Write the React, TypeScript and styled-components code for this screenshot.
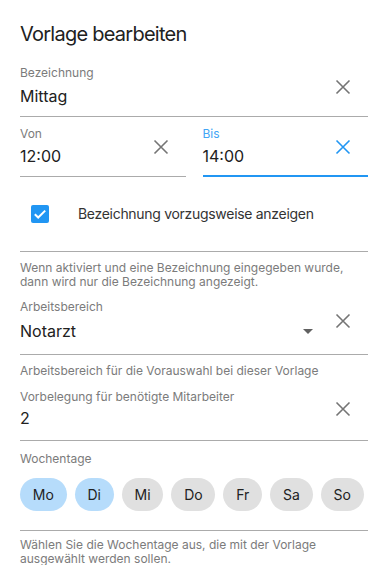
import React from "react";
import styled, { createGlobalStyle } from "styled-components";

const GlobalStyle = createGlobalStyle`
  html, body { margin: 0; padding: 0; background: #ffffff; }
  body { font-family: Inter, "Noto Sans", Roboto, sans-serif; }
  * { box-sizing: border-box; }
`;

const BLUE = "#2196f3";
const LINE = "#ababab";
const GREY_TEXT = "#7b7b7b";
const DARK = "#212121";

const Page = styled.div`
  width: 384px;
  padding: 22px 16px 0 20px;
  display: flex;
  flex-direction: column;
  font-family: Inter, "Noto Sans", Roboto, sans-serif;
  color: ${DARK};
`;

const Title = styled.h1`
  margin: 0;
  font-size: 20px;
  line-height: 24px;
  font-weight: 400;
  letter-spacing: -0.75px;
  color: ${DARK};
`;

const Field = styled.div<{ $mt?: number; $pb: number; $active?: boolean }>`
  display: flex;
  align-items: center;
  margin-top: ${(p) => p.$mt ?? 0}px;
  padding-bottom: ${(p) => p.$pb}px;
  border-bottom: ${(p) => (p.$active ? `2px solid ${BLUE}` : `1px solid ${LINE}`)};
`;

const FieldBody = styled.div`
  flex: 1;
  min-width: 0;
  display: flex;
  flex-direction: column;
`;

const Label = styled.span<{ $active?: boolean }>`
  font-size: 12px;
  line-height: 16px;
  color: ${(p) => (p.$active ? "#42a5f5" : GREY_TEXT)};
`;

const Value = styled.div<{ $gap: number }>`
  margin-top: ${(p) => p.$gap}px;
  font-size: 16px;
  line-height: 24px;
  color: ${DARK};
  display: flex;
  align-items: center;
  justify-content: space-between;
`;

const IconSlot = styled.span<{ $nudge?: number }>`
  width: 24px;
  height: 24px;
  margin: ${(p) => p.$nudge ?? 0}px 13px 0 0;
  display: inline-flex;
  flex-shrink: 0;
`;

const ArrowSlot = styled.span`
  width: 24px;
  height: 24px;
  margin-right: 11px;
  display: inline-flex;
`;

const TimeRow = styled.div`
  display: grid;
  grid-template-columns: 1fr 1fr;
  column-gap: 17px;
  margin-top: 9px;
`;

const CheckRow = styled.label`
  display: flex;
  align-items: center;
  gap: 29px;
  padding: 27px 0 27px 11px;
  border-bottom: 1px solid ${LINE};
`;

const CheckText = styled.span`
  font-size: 14px;
  line-height: 20px;
  letter-spacing: -0.3px;
  color: #333333;
`;

const Helper = styled.p<{ $mt: number }>`
  margin: ${(p) => p.$mt}px 0 0 0;
  font-size: 12px;
  line-height: 13.5px;
  color: ${GREY_TEXT};
`;

const DaySection = styled.div`
  margin-top: 10px;
  padding-bottom: 19.5px;
  border-bottom: 1px solid ${LINE};
  display: flex;
  flex-direction: column;
`;

const DayRow = styled.div`
  display: flex;
  gap: 8px;
  margin-top: 11px;
`;

const DayChip = styled.span<{ $selected?: boolean }>`
  height: 33px;
  padding: 0 12.8px;
  border-radius: 16.5px;
  display: inline-flex;
  align-items: center;
  justify-content: center;
  font-size: 14px;
  color: #222222;
  background: ${(p) => (p.$selected ? "#b6dcfb" : "#e0e0e0")};
`;

const ClearIcon = ({ color }: { color: string }) => (
  <svg width="24" height="24" viewBox="0 0 24 24" fill="none">
    <path d="M5.5 5.5L18.5 18.5M18.5 5.5L5.5 18.5" stroke={color} strokeWidth="1.6" />
  </svg>
);

const DropArrow = () => (
  <svg width="24" height="24" viewBox="0 0 24 24">
    <path d="M7 10l5 5 5-5z" fill="#616161" />
  </svg>
);

const CheckBox = () => (
  <svg width="18" height="18" viewBox="0 0 18 18">
    <rect x="0" y="0" width="18" height="18" rx="2" fill={BLUE} />
    <path d="M3.8 9.2L7.2 12.5L14.2 5.6" stroke="#ffffff" strokeWidth="2" fill="none" />
  </svg>
);

const days: { label: string; selected: boolean }[] = [
  { label: "Mo", selected: true },
  { label: "Di", selected: true },
  { label: "Mi", selected: false },
  { label: "Do", selected: false },
  { label: "Fr", selected: false },
  { label: "Sa", selected: false },
  { label: "So", selected: false },
];

export default function App() {
  return (
    <>
      <GlobalStyle />
      <Page>
        <Title>Vorlage bearbeiten</Title>

        <Field $mt={19} $pb={8}>
          <FieldBody>
            <Label>Bezeichnung</Label>
            <Value $gap={3}>Mittag</Value>
          </FieldBody>
          <IconSlot>
            <ClearIcon color="#757575" />
          </IconSlot>
        </Field>

        <TimeRow>
          <Field $pb={8}>
            <FieldBody>
              <Label>Von</Label>
              <Value $gap={2}>12:00</Value>
            </FieldBody>
            <IconSlot>
              <ClearIcon color="#757575" />
            </IconSlot>
          </Field>
          <Field $pb={7} $active>
            <FieldBody>
              <Label $active>Bis</Label>
              <Value $gap={2}>14:00</Value>
            </FieldBody>
            <IconSlot>
              <ClearIcon color={BLUE} />
            </IconSlot>
          </Field>
        </TimeRow>

        <CheckRow>
          <CheckBox />
          <CheckText>Bezeichnung vorzugsweise anzeigen</CheckText>
        </CheckRow>

        <Helper $mt={9}>
          Wenn aktiviert und eine Bezeichnung eingegeben wurde, dann wird nur die Bezeichnung
          angezeigt.
        </Helper>

        <Field $mt={11} $pb={11}>
          <FieldBody>
            <Label>Arbeitsbereich</Label>
            <Value $gap={4}>
              <span>Notarzt</span>
              <ArrowSlot>
                <DropArrow />
              </ArrowSlot>
            </Value>
          </FieldBody>
          <IconSlot>
            <ClearIcon color="#757575" />
          </IconSlot>
        </Field>

        <Helper $mt={9}>Arbeitsbereich für die Vorauswahl bei dieser Vorlage</Helper>

        <Field $mt={11} $pb={10}>
          <FieldBody>
            <Label>Vorbelegung für benötigte Mitarbeiter</Label>
            <Value $gap={1}>2</Value>
          </FieldBody>
          <IconSlot>
            <ClearIcon color="#757575" />
          </IconSlot>
        </Field>

        <DaySection>
          <Label>Wochentage</Label>
          <DayRow>
            {days.map((d) => (
              <DayChip key={d.label} $selected={d.selected}>
                {d.label}
              </DayChip>
            ))}
          </DayRow>
        </DaySection>

        <Helper $mt={7}>
          Wählen Sie die Wochentage aus, die mit der Vorlage ausgewählt werden sollen.
        </Helper>
      </Page>
    </>
  );
}
